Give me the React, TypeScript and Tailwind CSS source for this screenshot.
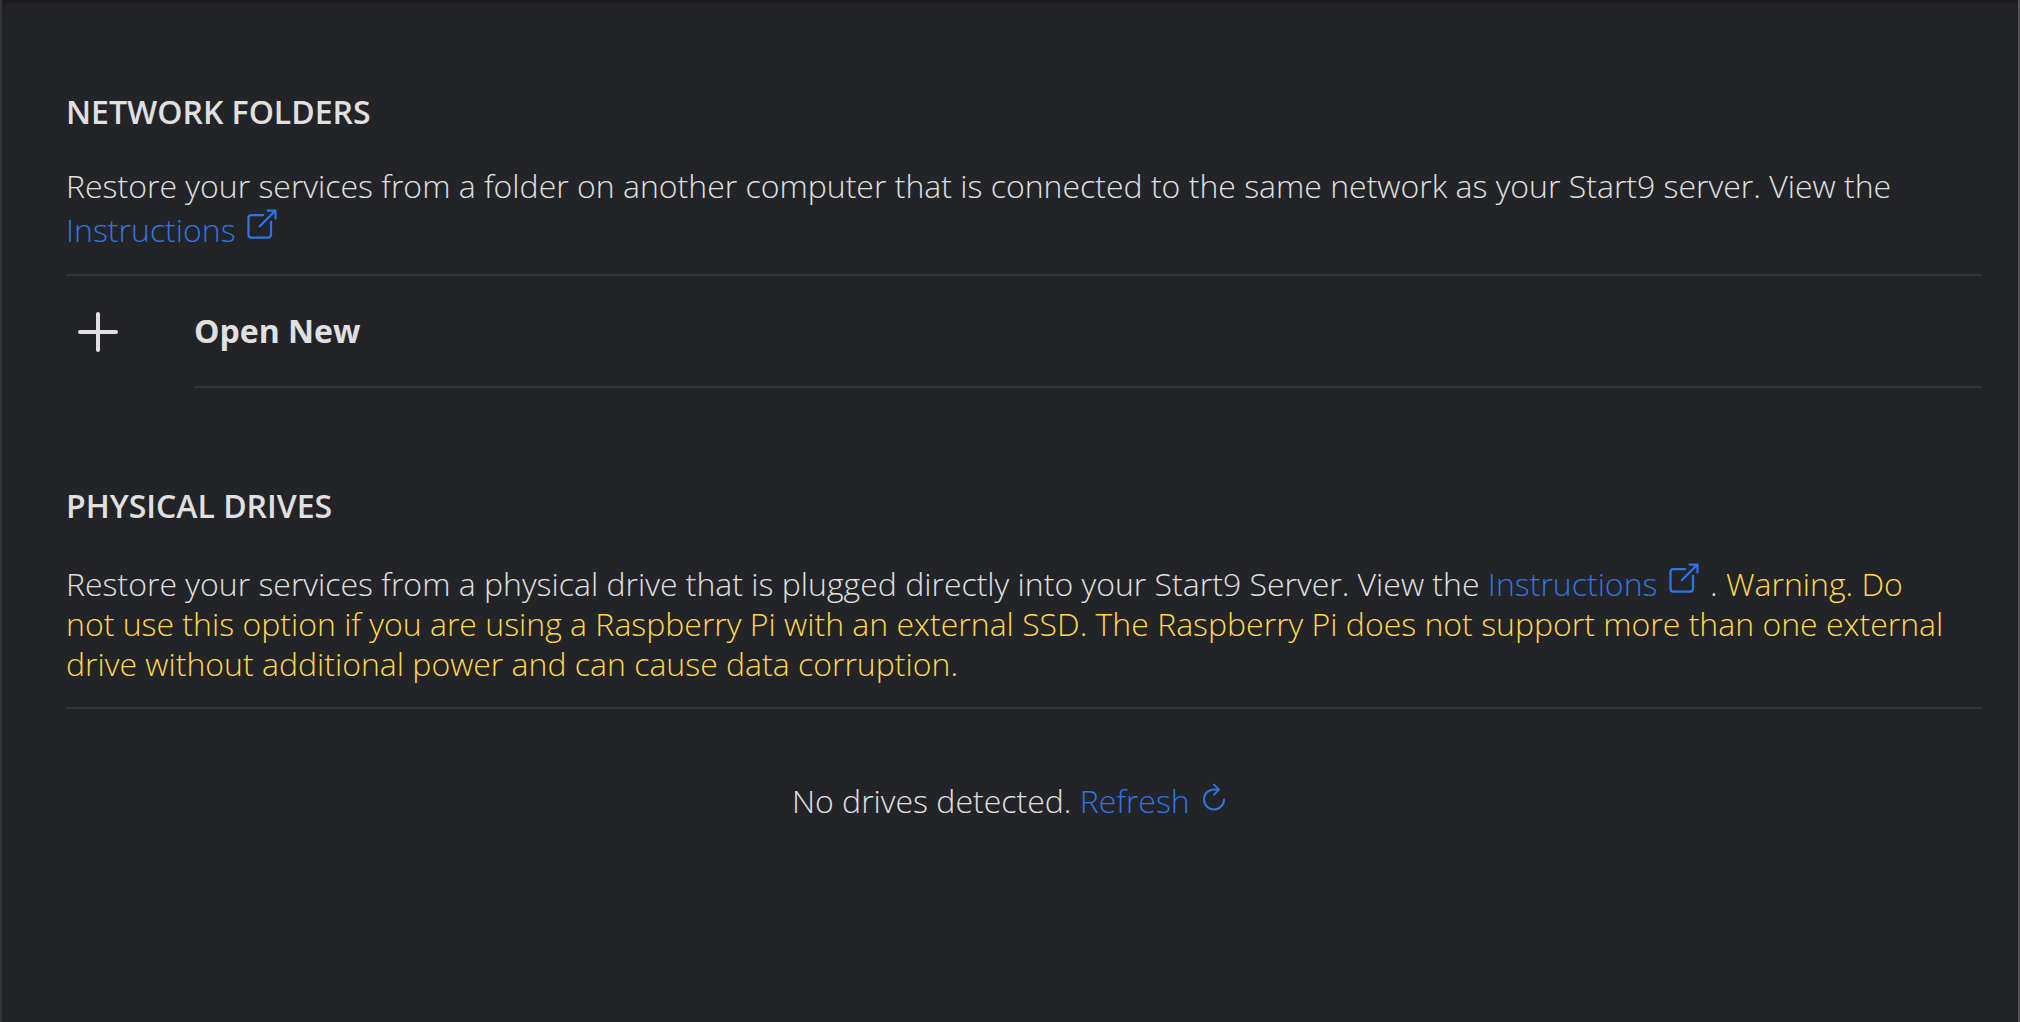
import { IoOpenOutline, IoAdd, IoRefresh } from "react-icons/io5";

const ExternalLink = () => (
  <a href="#instructions" className="text-[#2f75e0]">
    Instructions <IoOpenOutline className="inline-block size-9 align-baseline" aria-hidden="true" />
  </a>
);

export default function App() {
  return (
    <main className="min-h-screen border-x-2 border-l-[#353636] border-r-[#57575a] bg-[#232428] pt-[90px] pr-9 pl-16 font-['Open_Sans',sans-serif] text-[32px] leading-10 font-light text-[#e0e0e0] shadow-[inset_0_2px_0_#1a1b1d,inset_0_12px_8px_-8px_#1d1e20]">
      <section>
        <h2 className="leading-[44px] font-semibold">NETWORK FOLDERS</h2>
        <p className="mt-8 pr-8">
          Restore your services from a folder on another computer that is connected to the same network as your Start9 server. View the <ExternalLink />
        </p>
        <button type="button" className="mt-6 flex w-full items-center border-t-2 border-[#353636] text-left font-bold">
          <span className="w-32"><IoAdd className="size-16" aria-hidden="true" /></span>
          <span className="flex-1 border-b-2 border-[#353636] py-[35px]">Open New</span>
        </button>
      </section>
      <section className="mt-24">
        <h2 className="leading-[44px] font-semibold">PHYSICAL DRIVES</h2>
        <div className="mt-8 border-b-2 border-[#353636] pb-[23px]">
          <p className="pr-8">
            Restore your services from a physical drive that is plugged directly into your Start9 Server. View the <ExternalLink /> .{" "}
            <span className="text-[#ffd948]">Warning. Do not use this option if you are using a Raspberry Pi with an external SSD. The Raspberry Pi does not support more than one external drive without additional power and can cause data corruption.</span>
          </p>
        </div>
        <p className="mt-[72px] pr-[26px] text-center">
          No drives detected.{" "}
          <button type="button" className="text-[#2f75e0]">
            Refresh <IoRefresh className="inline-block size-8 align-baseline" aria-hidden="true" />
          </button>
        </p>
      </section>
    </main>
  );
}
